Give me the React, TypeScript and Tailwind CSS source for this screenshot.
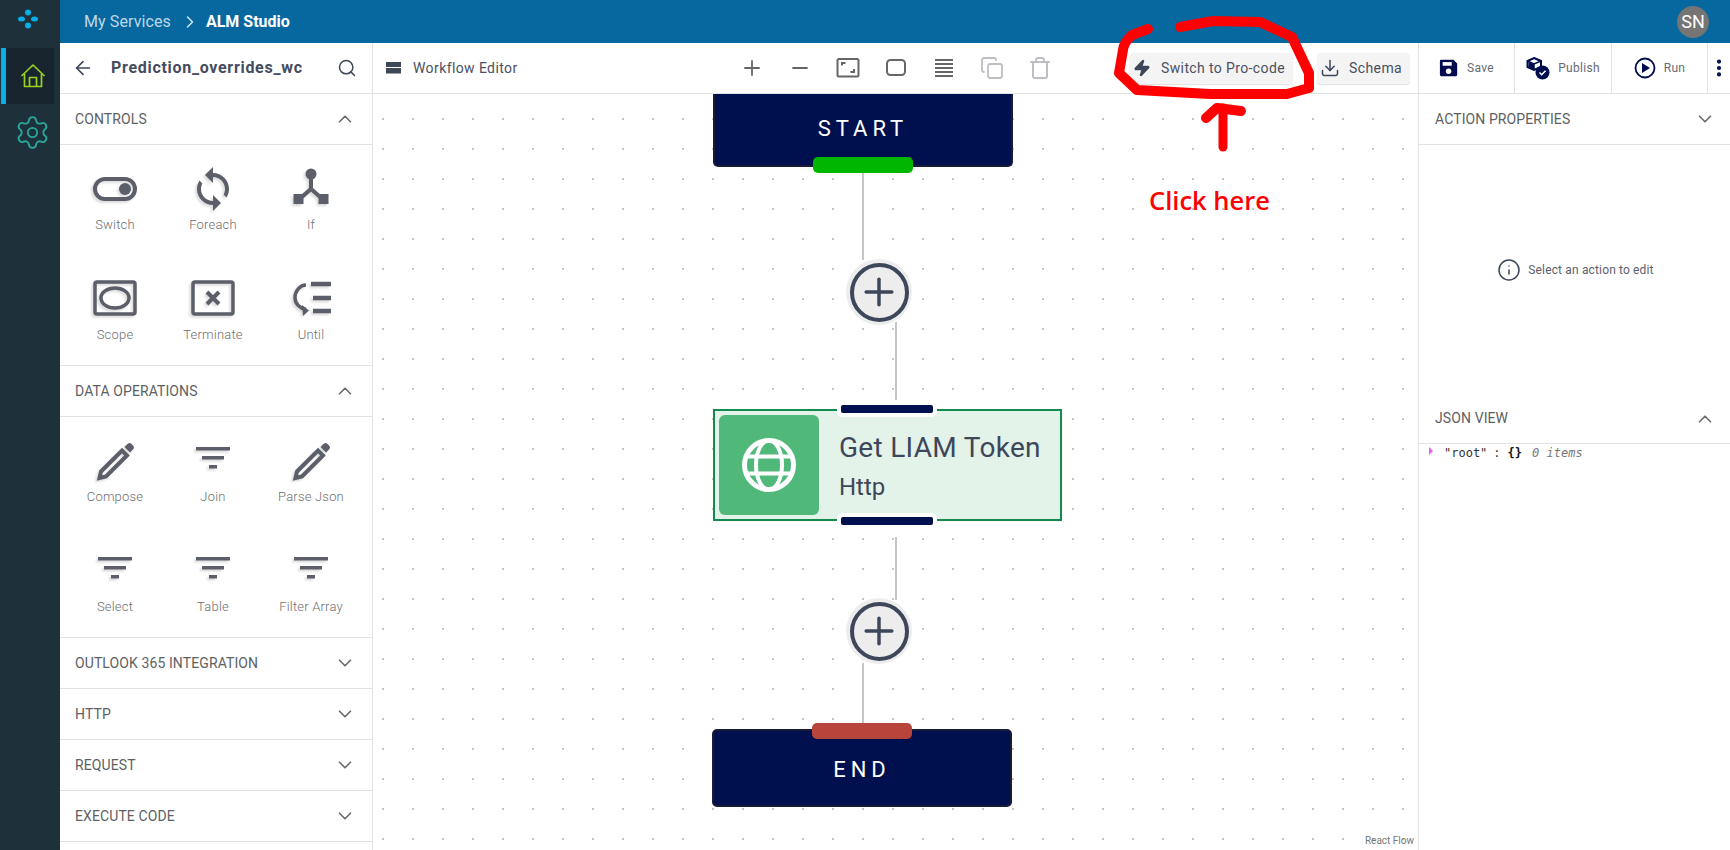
import React from "react";
import {
  ArrowLeft,
  ChevronDown,
  ChevronRight,
  ChevronUp,
  Copy,
  Download,
  Info,
  Minus,
  MoreVertical,
  Plus,
  Search,
  Settings,
  Trash,
  Zap,
} from "lucide-react";

const ICON_SHADOW = "drop-shadow-[-2px_2px_1px_#dcdcdc]";

/* Palette icons, drawn on a 48 box */
function SwitchIcon() {
  return (
    <svg width="48" height="48" viewBox="0 0 48 48" className={ICON_SHADOW}>
      <rect x="4" y="14" width="40" height="20" rx="10" fill="none" stroke="#5c5f69" strokeWidth="4" />
      <circle cx="34" cy="24" r="6" fill="#5c5f69" />
    </svg>
  );
}

function ForeachIcon() {
  return (
    <svg width="48" height="48" viewBox="0 0 24 24" fill="#5c5f69" className={ICON_SHADOW}>
      <path d="M12 4V1L8 5l4 4V6c3.31 0 6 2.69 6 6 0 1.01-.25 1.97-.7 2.8l1.46 1.46C19.54 15.03 20 13.57 20 12c0-4.42-3.58-8-8-8zm0 14c-3.31 0-6-2.69-6-6 0-1.01.25-1.97.7-2.8L5.24 7.74C4.46 8.97 4 10.43 4 12c0 4.42 3.58 8 8 8v3l4-4-4-4v3z" />
    </svg>
  );
}

function IfIcon() {
  return (
    <svg width="48" height="48" viewBox="0 0 48 48" fill="#5c5f69" className={ICON_SHADOW}>
      <circle cx="24" cy="9" r="5.5" />
      <path d="M24 12v14M8 38l16-14 16 14" fill="none" stroke="#5c5f69" strokeWidth="4" />
      <rect x="6.5" y="29" width="10" height="10" />
      <rect x="31.5" y="29" width="10" height="10" />
    </svg>
  );
}

function ScopeIcon() {
  return (
    <svg width="48" height="48" viewBox="0 0 48 48" className={ICON_SHADOW}>
      <rect x="4" y="7" width="40" height="32" rx="2" fill="none" stroke="#5c5f69" strokeWidth="3.5" />
      <ellipse cx="24" cy="23" rx="14" ry="10" fill="none" stroke="#5c5f69" strokeWidth="3.5" />
    </svg>
  );
}

function TerminateIcon() {
  return (
    <svg width="48" height="48" viewBox="0 0 48 48" className={ICON_SHADOW}>
      <rect x="4" y="7" width="40" height="32" rx="2" fill="none" stroke="#5c5f69" strokeWidth="3.5" />
      <path d="M18 17l12 12M30 17L18 29" stroke="#5c5f69" strokeWidth="4" fill="none" />
    </svg>
  );
}

function UntilIcon() {
  return (
    <svg width="48" height="48" viewBox="0 0 48 48" fill="none" stroke="#5c5f69" strokeWidth="3.5" className={ICON_SHADOW}>
      <path d="M19 10c-6 0-11 6-11 12.500s5 11 11 12" />
      <path d="M15 30l7 5.500-6 5.500" fill="#5c5f69" stroke="none" />
      <path d="M24 9h20M26 23h18M26 36h18" strokeWidth="4.500" />
    </svg>
  );
}

function PencilIcon() {
  return (
    <svg width="48" height="48" viewBox="0 0 48 48" className={ICON_SHADOW}>
      <path d="M10 34.500 L31 13.500 L36 18.500 L15 39.500 L8.500 41 Z" fill="none" stroke="#5c5f69" strokeWidth="4" />
      <path d="M33.500 10 L37 6.500 Q38.500 5.500 40 6.500 L42.500 9 Q43.500 10.500 42.500 12 L39 15.500 Z" fill="#5c5f69" />
    </svg>
  );
}

function FilterIcon() {
  return (
    <svg width="48" height="48" viewBox="0 0 48 48" fill="#5c5f69" className={ICON_SHADOW}>
      <rect x="7" y="10" width="34" height="3.500" />
      <rect x="13" y="19" width="22" height="3.500" />
      <rect x="20" y="28" width="8" height="3.500" />
    </svg>
  );
}

function SaveIcon() {
  return (
    <svg width="20" height="20" viewBox="0 0 22 22" fill="#000c4d">
      <path d="M2.500 2h13.500l4 4v12.500a1.500 1.500 0 0 1-1.500 1.500h-16A1.500 1.500 0 0 1 1 18.500v-15A1.500 1.500 0 0 1 2.500 2z" />
      <rect x="4" y="4.500" width="10" height="4" fill="#ffffff" />
      <circle cx="10.500" cy="14.500" r="3" fill="#ffffff" />
    </svg>
  );
}

function PublishIcon() {
  return (
    <svg width="24" height="24" viewBox="0 0 24 24">
      <path d="M8 2l7 3v6l-7 3-6.500-3V5z" fill="none" stroke="#000c4d" strokeWidth="2" />
      <path d="M1.500 5L8 8l7-3M8 8v6" fill="none" stroke="#000c4d" strokeWidth="1.500" />
      <path d="M2.500 6L8 8.500v5L2.500 11z" fill="#000c4d" />
      <circle cx="16.500" cy="16.500" r="7" fill="#000c4d" />
      <path d="M13.500 16.500l2.200 2.200 3.800-4" fill="none" stroke="#ffffff" strokeWidth="1.600" />
    </svg>
  );
}

function RunIcon() {
  return (
    <svg width="22" height="22" viewBox="0 0 22 22">
      <circle cx="11" cy="11" r="9.500" fill="none" stroke="#000c4d" strokeWidth="1.800" />
      <path d="M8 6l8 5-8 5z" fill="#000c4d" />
    </svg>
  );
}

function HomeIcon() {
  return (
    <svg width="26" height="26" viewBox="0 0 26 26" fill="none" stroke="#9ad31d" strokeWidth="1.700" strokeLinejoin="round">
      <path d="M1.500 13L13 2l11.500 11" />
      <path d="M4.500 11v12.500h17V11" />
      <path d="M9.500 23.500v-9h7v9" />
    </svg>
  );
}

function GlobeIcon() {
  return (
    <svg width="56" height="56" viewBox="0 0 56 56" fill="none" stroke="#ffffff">
      <circle cx="28" cy="28" r="24.500" strokeWidth="5" />
      <ellipse cx="28" cy="28" rx="13" ry="24.500" strokeWidth="4" />
      <path d="M5 19.500h46M5 36.500h46" strokeWidth="4" />
    </svg>
  );
}

function PaletteItem({ label, icon }: { label: string; icon: React.ReactNode }) {
  return (
    <div className="flex flex-col items-center">
      <div className="flex h-[48px] items-center justify-center">{icon}</div>
      <span className="mt-[3px] text-[13px] leading-[18px] font-light tracking-[0.2px] text-[#6f6f6f]">{label}</span>
    </div>
  );
}

function SectionHeader({ title, open }: { title: string; open?: boolean }) {
  return (
    <div className="flex h-[51px] shrink-0 items-center justify-between border-b border-[#e2e2e2] pr-[16px] pl-[15px]">
      <span className="text-[14px] tracking-[0.1px] text-[#5e5f63]">{title}</span>
      {open ? (
        <ChevronUp size={22} strokeWidth={1.8} className="text-[#6a6a6a]" />
      ) : (
        <ChevronDown size={22} strokeWidth={1.8} className="text-[#6a6a6a]" />
      )}
    </div>
  );
}

function Sidebar() {
  return (
    <aside className="flex w-[313px] shrink-0 flex-col overflow-hidden border-r border-[#e2e2e2] bg-white">
      <div className="flex h-[51px] shrink-0 items-center border-b border-[#e2e2e2] pr-[15px] pl-[12px]">
        <ArrowLeft size={22} strokeWidth={1.8} className="text-[#3e4759]" />
        <span className="ml-[17px] w-[191px] truncate text-[16px] font-bold tracking-[0.7px] text-[#454c5e] [text-overflow:clip]">
          Prediction_overrides_wc
        </span>
        <Search size={20} strokeWidth={1.8} className="ml-auto text-[#3e4759]" />
      </div>
      <SectionHeader title="CONTROLS" open />
      <div className="grid h-[221px] shrink-0 grid-cols-3 content-start gap-y-[41px] border-b border-[#e2e2e2] pt-[20px] pr-[12px] pl-[6px]">
        <PaletteItem label="Switch" icon={<SwitchIcon />} />
        <PaletteItem label="Foreach" icon={<ForeachIcon />} />
        <PaletteItem label="If" icon={<IfIcon />} />
        <PaletteItem label="Scope" icon={<ScopeIcon />} />
        <PaletteItem label="Terminate" icon={<TerminateIcon />} />
        <PaletteItem label="Until" icon={<UntilIcon />} />
      </div>
      <SectionHeader title="DATA OPERATIONS" open />
      <div className="grid h-[221px] shrink-0 grid-cols-3 content-start gap-y-[41px] border-b border-[#e2e2e2] pt-[20px] pr-[12px] pl-[6px]">
        <PaletteItem label="Compose" icon={<PencilIcon />} />
        <PaletteItem label="Join" icon={<FilterIcon />} />
        <PaletteItem label="Parse Json" icon={<PencilIcon />} />
        <PaletteItem label="Select" icon={<FilterIcon />} />
        <PaletteItem label="Table" icon={<FilterIcon />} />
        <PaletteItem label="Filter Array" icon={<FilterIcon />} />
      </div>
      <SectionHeader title="OUTLOOK 365 INTEGRATION" />
      <SectionHeader title="HTTP" />
      <SectionHeader title="REQUEST" />
      <SectionHeader title="EXECUTE CODE" />
    </aside>
  );
}

function EditorToolbar() {
  return (
    <div className="flex h-[51px] shrink-0 items-center border-b border-[#e2e2e2] bg-white">
      <svg width="16" height="12" viewBox="0 0 16 12" fill="#3e4759" className="ml-[13px]">
        <rect width="15" height="5" />
        <rect y="6" width="15" height="5.500" />
      </svg>
      <span className="ml-[11px] text-[14px] tracking-[0.4px] text-[#4a5060]">Workflow Editor</span>
      <div className="ml-[222px] flex items-center gap-[24px]">
        <Plus size={24} strokeWidth={1.8} className="text-[#666666]" />
        <Minus size={24} strokeWidth={1.8} className="text-[#666666]" />
        <svg width="24" height="24" viewBox="0 0 24 24" fill="none" stroke="#666666" strokeWidth="2">
          <rect x="1.500" y="3" width="21" height="17.500" rx="1.500" />
          <path d="M6 9.500V7h3.500M18 13v3h-3.500" />
        </svg>
        <svg width="24" height="24" viewBox="0 0 24 24" fill="none" stroke="#666666" strokeWidth="2">
          <rect x="3" y="4" width="18" height="15" rx="3.500" />
        </svg>
        <svg width="24" height="24" viewBox="0 0 24 24" stroke="#666666" strokeWidth="2">
          <path d="M3 4h18M3 8h18M3 12h18M3 16h18M3 20h18" />
        </svg>
        <Copy size={24} strokeWidth={1.8} className="text-[#bcbec4]" />
        <Trash size={24} strokeWidth={2} className="text-[#bcbec4]" />
      </div>
      <button className="ml-auto flex h-[31px] w-[164px] items-center rounded-[4px] bg-[#f4f4f5] pl-[4px] shadow-[0_1px_1px_#e0e0e0]">
        <Zap size={18} className="fill-[#3e4759] text-[#3e4759]" />
        <span className="ml-[10px] text-[14px] tracking-[0.38px] text-[#4a5060]">Switch to Pro-code</span>
      </button>
      <button className="mr-[8px] ml-[24px] flex h-[31px] w-[93px] items-center rounded-[4px] bg-[#f4f4f5] pl-[3px] shadow-[0_1px_1px_#e0e0e0]">
        <Download size={20} strokeWidth={1.8} className="text-[#3e4759]" />
        <span className="ml-[9px] text-[14px] tracking-[0.4px] text-[#4a5060]">Schema</span>
      </button>
    </div>
  );
}

function AddButton({ className }: { className: string }) {
  return (
    <div className={`absolute flex h-[66px] w-[66px] items-center justify-center rounded-full bg-[#ededee] ${className}`}>
      <div className="flex h-[59px] w-[59px] items-center justify-center rounded-full border-[4px] border-[#3e4759]">
        <Plus size={44} strokeWidth={1.9} className="text-[#3e4759]" />
      </div>
    </div>
  );
}

function Canvas() {
  return (
    <div className="relative flex-1 overflow-hidden bg-white bg-[radial-gradient(#c4c4c4_0.7px,transparent_1px)] bg-[size:30px_30px] bg-[position:-5px_10px]">
      {/* connectors */}
      <div className="absolute top-[79px] left-[489px] h-[87px] w-[2px] bg-[#c4c4ca]" />
      <div className="absolute top-[228px] left-[522px] h-[78px] w-[2px] bg-[#c4c4ca]" />
      <div className="absolute top-[443px] left-[522px] h-[63px] w-[2px] bg-[#c4c4ca]" />
      <div className="absolute top-[569px] left-[489px] h-[60px] w-[2px] bg-[#c4c4ca]" />

      {/* start node */}
      <div className="absolute top-0 left-[340px] flex h-[73px] w-[300px] items-center justify-center rounded-b-[5px] border-[2px] border-t-0 border-[#1a1a35] bg-[#000f4d] pb-[3px]">
        <span className="text-[22px] tracking-[5px] text-white">START</span>
      </div>
      <div className="absolute top-[63px] left-[440px] h-[16px] w-[100px] rounded-[5px] bg-[#00b700]" />

      <AddButton className="top-[165px] left-[473px]" />

      {/* http node */}
      <div className="absolute top-[315px] left-[340px] flex h-[112px] w-[349px] items-center border-[2px] border-[#138a4e] bg-[#e3f3ea] pl-[4px]">
        <div className="flex h-[100px] w-[100px] items-center justify-center rounded-[6px] bg-[#50b878]">
          <GlobeIcon />
        </div>
        <div className="ml-[20px] flex flex-col pt-[3px] text-[#3e4759]">
          <span className="text-[28px] leading-[36px] tracking-[0.3px]">Get LIAM Token</span>
          <span className="mt-[4px] text-[24px] leading-[34px]">Http</span>
        </div>
      </div>
      <div className="absolute top-[311px] left-[468px] h-[8px] w-[92px] rounded-[2px] bg-[#000f4d] shadow-[0_0_0_4px_#ffffff]" />
      <div className="absolute top-[423px] left-[468px] h-[8px] w-[92px] rounded-[2px] bg-[#000f4d] shadow-[0_0_0_4px_#ffffff]" />

      <AddButton className="top-[504px] left-[473px]" />

      {/* end node */}
      <div className="absolute top-[635px] left-[339px] flex h-[78px] w-[300px] items-center justify-center rounded-[5px] border-[2px] border-[#1a1a35] bg-[#000f4d] pt-[3px]">
        <span className="text-[22px] tracking-[5px] text-white">END</span>
      </div>
      <div className="absolute top-[629px] left-[439px] h-[16px] w-[100px] rounded-[5px] bg-[#b8453c]" />

      <span className="absolute right-[4px] bottom-[2px] text-[10px] text-[#777777]">React Flow</span>
    </div>
  );
}

function RightToolButton({ icon, label, width }: { icon: React.ReactNode; label: string; width: string }) {
  return (
    <div className={`flex h-full items-center justify-center gap-[8px] border-r border-[#e2e2e2] ${width}`}>
      {icon}
      <span className="text-[12px] tracking-[0.3px] text-[#666b76]">{label}</span>
    </div>
  );
}

function RightPanel() {
  return (
    <aside className="flex w-[312px] shrink-0 flex-col border-l border-[#e2e2e2] bg-white">
      <div className="flex h-[51px] shrink-0 items-center border-b border-[#e2e2e2]">
        <RightToolButton icon={<SaveIcon />} label="Save" width="w-[96px]" />
        <RightToolButton icon={<PublishIcon />} label="Publish" width="w-[97px]" />
        <RightToolButton icon={<RunIcon />} label="Run" width="w-[96px]" />
        <MoreVertical size={22} strokeWidth={2.600} className="text-[#000c4d]" />
      </div>
      <div className="flex h-[51px] shrink-0 items-center justify-between border-b border-[#e2e2e2] pr-[14px] pl-[16px]">
        <span className="text-[14px] tracking-[0.1px] text-[#5e5f63]">ACTION PROPERTIES</span>
        <ChevronDown size={22} strokeWidth={1.800} className="text-[#6a6a6a]" />
      </div>
      <div className="flex h-[249px] shrink-0 items-center justify-center pl-[2px]">
        <Info size={24} strokeWidth={1.500} className="text-[#3e4759]" />
        <span className="ml-[7px] text-[12px] tracking-[0.15px] text-[#5c616c]">Select an action to edit</span>
      </div>
      <div className="flex h-[50px] shrink-0 items-center justify-between border-b border-[#e2e2e2] pr-[14px] pl-[16px]">
        <span className="text-[14px] tracking-[0.1px] text-[#5e5f63]">JSON VIEW</span>
        <ChevronUp size={22} strokeWidth={1.800} className="text-[#6a6a6a]" />
      </div>
      <div className="flex items-center pl-[10px] font-['DejaVu_Sans_Mono',monospace] text-[12px] leading-[18px]">
        <span className="mb-[4px] h-0 w-0 border-y-[4px] border-l-[4px] border-y-transparent border-l-[#f35bf0]" />
        <span className="ml-[11px] text-[#333333]">"root"</span>
        <span className="mr-[7px] ml-[6px] text-[#333333]">:</span>
        <span className="font-bold text-[#111111]">{"{}"}</span>
        <span className="ml-[10px] text-[#777777] italic">0 items</span>
      </div>
    </aside>
  );
}

function Annotation() {
  return (
    <div className="pointer-events-none absolute inset-0">
      <svg width="1730" height="850" viewBox="0 0 1730 850" fill="none" stroke="#ff0000" strokeWidth="10" strokeLinecap="round" strokeLinejoin="round">
        <path d="M1148 29 L1132 35 Q1124 42 1123 50 L1119 73 L1137 90 L1210 94 L1287 94 L1309 88 L1309 73 L1292 37 L1260 22 L1213 21 L1180 27" />
        <path d="M1223 147 L1223 108" strokeWidth="9" />
        <path d="M1206 118 L1217 108 L1241 111" strokeWidth="10" />
      </svg>
      <span className="absolute top-[182px] left-[1149px] font-['Open_Sans',sans-serif] text-[25.5px] leading-[36px] font-semibold whitespace-nowrap text-[#ff0000]">
        Click here
      </span>
    </div>
  );
}

export default function App() {
  return (
    <div className="relative flex h-[850px] w-[1730px] overflow-hidden bg-white font-['Roboto',sans-serif]">
      {/* left rail */}
      <nav className="flex w-[60px] shrink-0 flex-col bg-[#1e303a]">
        <svg width="20" height="20" viewBox="0 0 20 20" fill="#08aeea" className="mt-[9px] ml-[18px]">
          <circle cx="10" cy="3.500" r="3" />
          <circle cx="10" cy="16.500" r="3" />
          <ellipse cx="3.500" cy="10" rx="3.500" ry="2.500" />
          <ellipse cx="16.500" cy="10" rx="3.500" ry="2.500" />
        </svg>
        <div className="mt-[19px] ml-[1px] flex h-[56px] w-[53px] items-center justify-center border-l-[5px] border-[#08aeea] bg-[#18252e] pl-[6px]">
          <HomeIcon />
        </div>
        <Settings size={37} strokeWidth={1.200} className="mt-[10px] ml-[14px] text-[#2aa79b]" />
      </nav>

      <div className="flex min-w-0 flex-1 flex-col">
        {/* top bar */}
        <header className="flex h-[43px] shrink-0 items-center bg-[#07689f] pr-[21px] pl-[24px]">
          <span className="text-[16px] tracking-[0.1px] text-[#bcd8e8]">My Services</span>
          <ChevronRight size={20} strokeWidth={1.800} className="ml-[9px] text-[#d5e6f0]" />
          <span className="ml-[6px] text-[16px] font-bold text-white">ALM Studio</span>
          <div className="ml-auto flex h-[32px] w-[32px] items-center justify-center rounded-full bg-[#757575] text-[18px] text-white">
            SN
          </div>
        </header>

        <div className="flex min-h-0 flex-1">
          <Sidebar />
          <div className="flex min-w-0 flex-1 flex-col">
            <EditorToolbar />
            <Canvas />
          </div>
          <RightPanel />
        </div>
      </div>

      <Annotation />
    </div>
  );
}
